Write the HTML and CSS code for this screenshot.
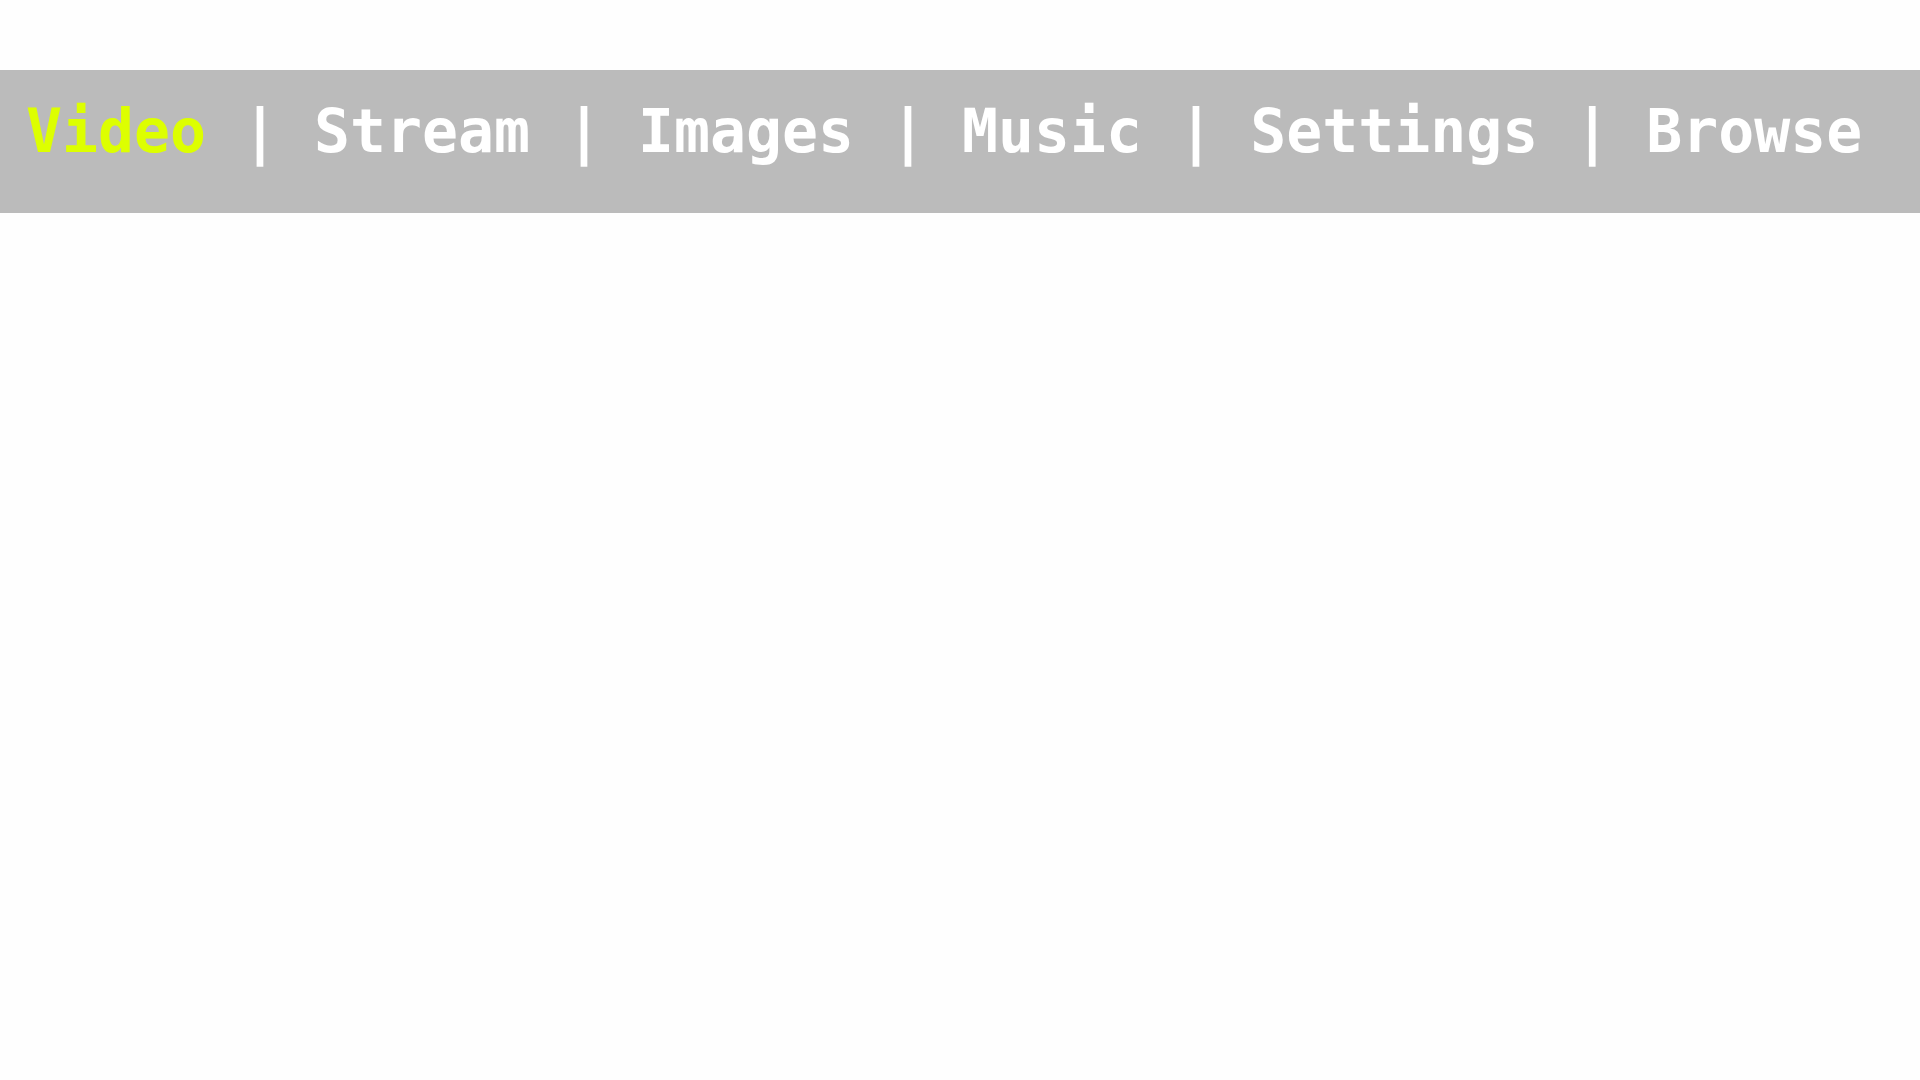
FILE: index.html
```html
<!DOCTYPE html>
<html>
<head>
<meta charset="utf-8">
<link rel="stylesheet" href="styles.css">
</head>
<body>
<nav class="menu"><span class="active">Video</span> | <span>Stream</span> | <span>Images</span> | <span>Music</span> | <span>Settings</span> | <span>Browse</span></nav>
</body>
</html>
```
FILE: styles.css
```css
html, body {
  margin: 0;
  padding: 0;
  background: #fefefe;
}
.menu {
  margin-top: 70px;
  background: #bbbbbb;
  color: #ffffff;
  font-family: "DejaVu Sans Mono", monospace;
  font-weight: bold;
  font-size: 59.8px;
  line-height: 70px;
  padding: 26px 0 47px 26px;
  white-space: pre;
}
.active {
  color: #ddff00;
}
```
